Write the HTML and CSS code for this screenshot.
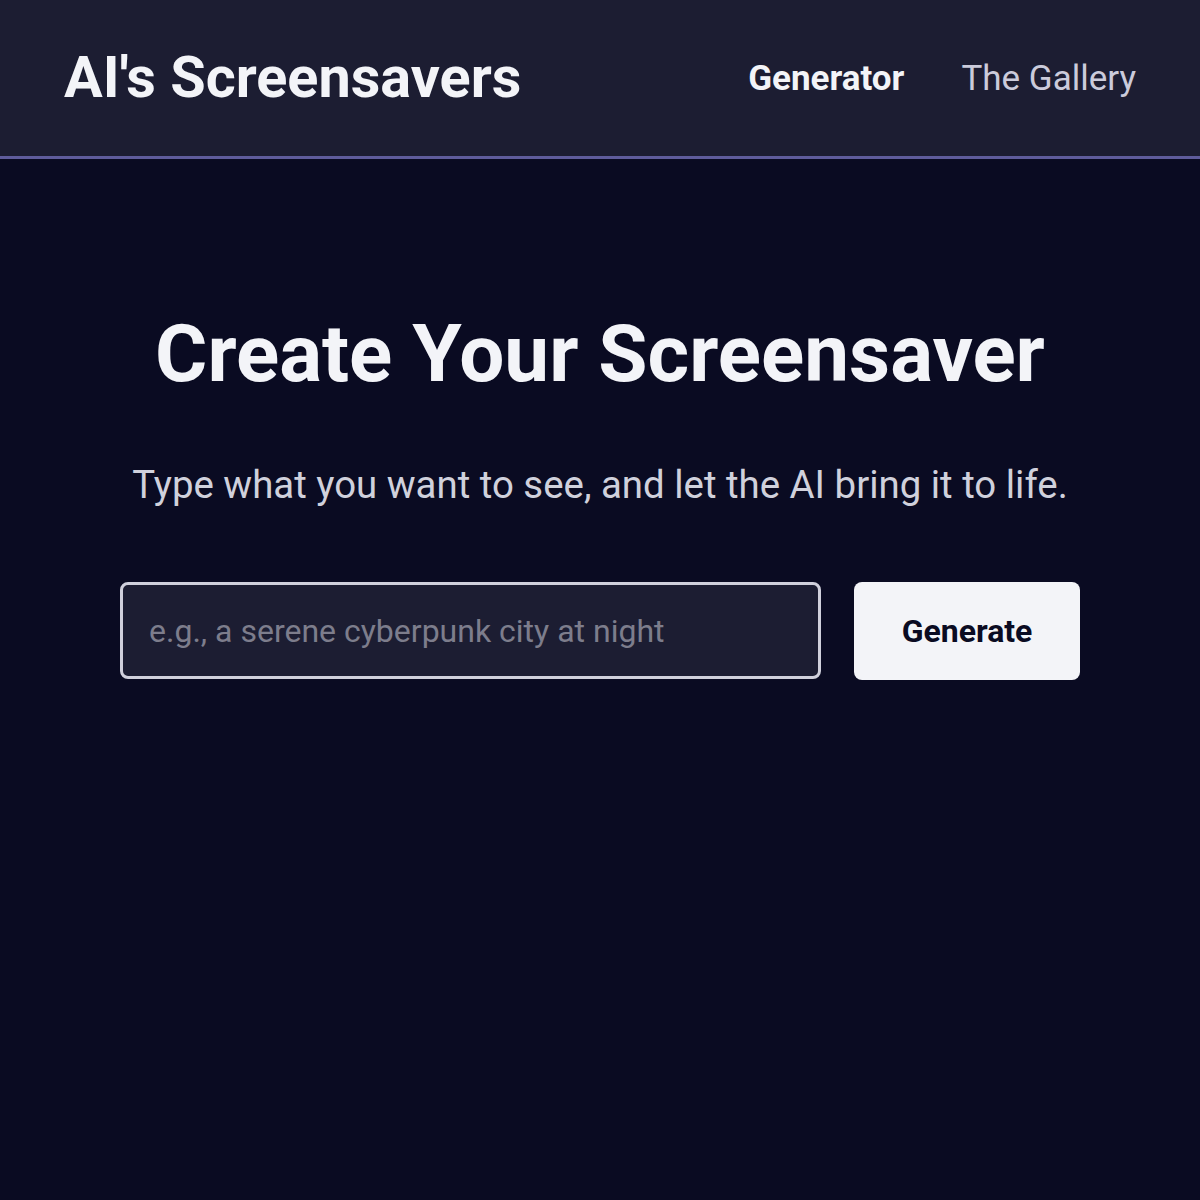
FILE: index.html
```html
<!DOCTYPE html>
<html lang="en">
<head>
<meta charset="utf-8">
<title>AI's Screensavers</title>
<link rel="stylesheet" href="styles.css">
</head>
<body>
<header class="site-header">
  <div class="logo">AI's Screensavers</div>
  <nav class="nav">
    <a class="nav-link active" href="#">Generator</a>
    <a class="nav-link" href="#">The Gallery</a>
  </nav>
</header>
<main class="main">
  <h1 class="title">Create Your Screensaver</h1>
  <p class="subtitle">Type what you want to see, and let the AI bring it to life.</p>
  <form class="prompt-form">
    <input class="prompt-input" type="text" placeholder="e.g., a serene cyberpunk city at night">
    <button class="generate-btn" type="button">Generate</button>
  </form>
</main>
</body>
</html>
```
FILE: styles.css
```css
* { box-sizing: border-box; }
html, body {
  margin: 0;
  padding: 0;
  background: #0a0b22;
  font-family: Roboto, "Liberation Sans", sans-serif;
  min-height: 100%;
}
body { min-height: 1200px; }
.site-header {
  height: 159px;
  background: #1c1d32;
  border-bottom: 3px solid #5f5c9c;
  display: flex;
  align-items: center;
  justify-content: space-between;
  padding: 0 64px;
}
.logo {
  color: #f3f4f8;
  font-weight: 700;
  font-size: 57.6px;
  line-height: 1;
}
.nav {
  display: flex;
  gap: 57px;
  align-items: center;
}
.nav-link {
  color: #cbcbdb;
  font-size: 35px;
  text-decoration: none;
}
.nav-link.active {
  color: #f3f4f8;
  font-weight: 700;
}
.main {
  display: flex;
  flex-direction: column;
  align-items: center;
  padding-top: 147px;
}
.title {
  margin: 0;
  color: #f3f4f8;
  font-size: 80px;
  font-weight: 700;
  line-height: 1.2;
}
.subtitle {
  margin: 60px 0 0;
  color: #d0d1dc;
  font-size: 38.4px;
  line-height: 1.2;
}
.prompt-form {
  margin-top: 74px;
  width: 960px;
  display: flex;
  gap: 33px;
}
.prompt-input {
  flex: 1;
  height: 97px;
  background: #1c1d32;
  border: 3px solid #d0d0dc;
  border-radius: 8px;
  padding: 0 26px;
  color: #f3f4f8;
  font-family: Roboto, "Liberation Sans", sans-serif;
  font-size: 32px;
  outline: none;
}
.prompt-input::placeholder { color: #7d7d8c; }
.generate-btn {
  width: 226px;
  height: 98px;
  background: #f3f4f8;
  border: none;
  border-radius: 8px;
  color: #0a0b22;
  font-family: Roboto, "Liberation Sans", sans-serif;
  font-weight: 700;
  font-size: 32px;
  cursor: pointer;
}
```
